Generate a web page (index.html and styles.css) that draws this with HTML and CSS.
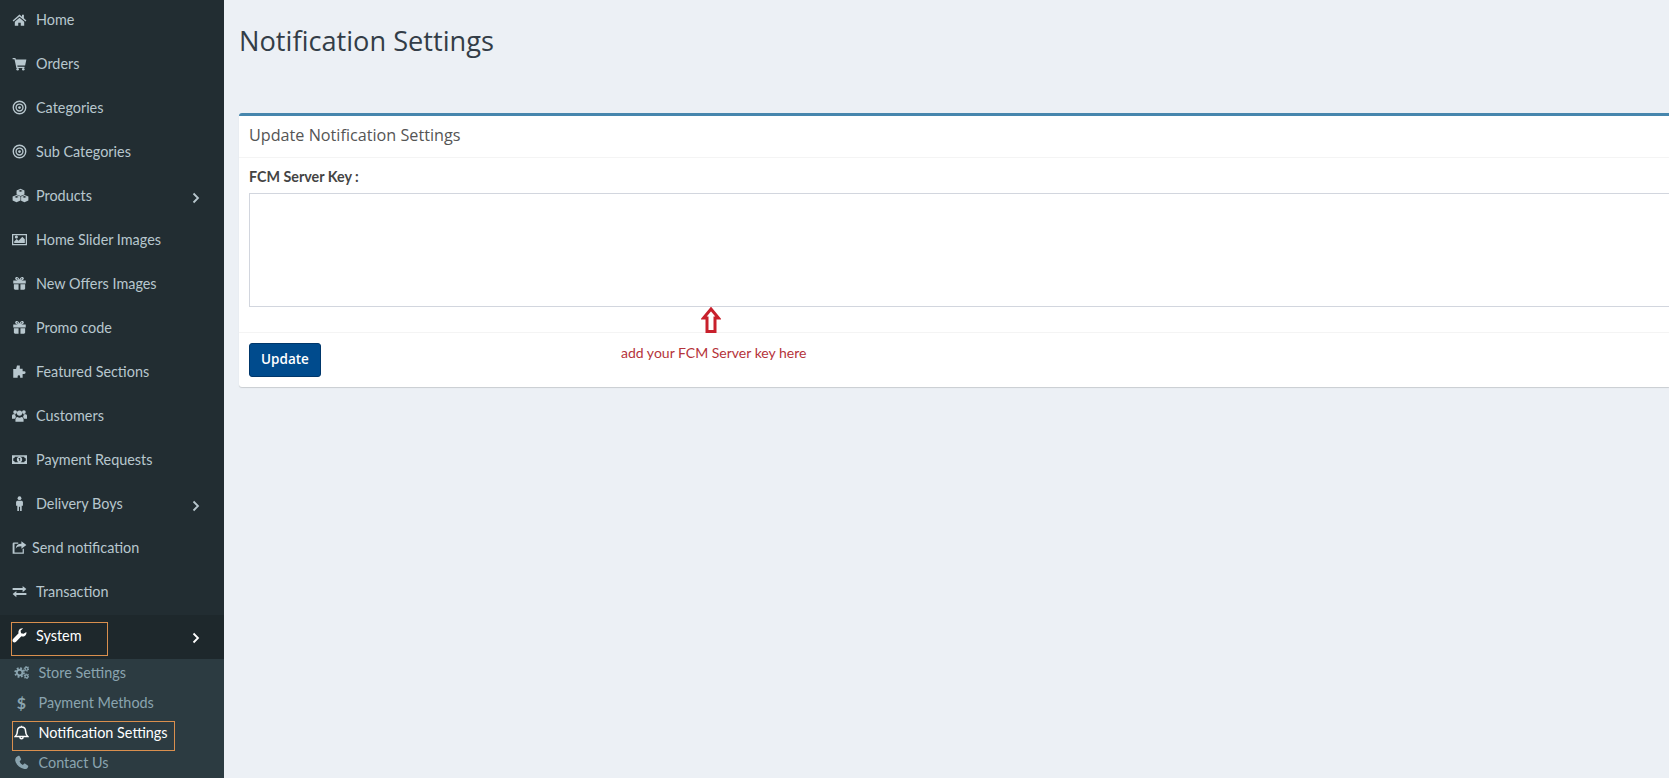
FILE: index.html
```html
<!DOCTYPE html>
<html lang="en">
<head>
  <meta charset="UTF-8">
  <title>Notification Settings</title>
  <link rel="stylesheet" href="styles.css">
</head>
<body>
  <aside class="sidebar">
    <a class="nav-item"><svg class="icon" viewBox="0 0 24 24"><path d="M12 4 1 13.500l1.400 1.600L12 7l9.600 8.100 1.400-1.600-4-3.400V4.500h-3v3zM4.500 15.500V22H10v-5h4v5h5.500v-6.500L12 9.200z"/></svg><span>Home</span></a>
    <a class="nav-item"><svg class="icon" viewBox="0 0 24 24"><path d="M1 3h4.500l.6 2.500H23l-2 9.500H8.500l.4 2H20v2.200H7L4 5.200H1z"/><circle cx="9" cy="21" r="2"/><circle cx="18" cy="21" r="2"/></svg><span>Orders</span></a>
    <a class="nav-item"><svg class="icon" viewBox="0 0 24 24"><circle class="ring" cx="12" cy="12" r="10"/><circle class="ring" cx="12" cy="12" r="5.500"/><circle cx="12" cy="12" r="2.200"/></svg><span>Categories</span></a>
    <a class="nav-item"><svg class="icon" viewBox="0 0 24 24"><circle class="ring" cx="12" cy="12" r="10"/><circle class="ring" cx="12" cy="12" r="5.500"/><circle cx="12" cy="12" r="2.200"/></svg><span>Sub Categories</span></a>
    <a class="nav-item has-arrow"><svg class="icon wide" viewBox="0 0 28 24"><path fill-rule="evenodd" d="M14 1l6.500 2.700v6.600L14 13l-6.500-2.700V3.700zM14 3 10.500 4.400 14 5.800l3.500-1.400zM7.500 11 14 13.700v6.600L7.500 23 1 20.300v-6.600zM7.500 13 4 14.400l3.500 1.400 3.500-1.400zM20.500 11l6.500 2.700v6.600L20.500 23 15 20.700v-7z M20.500 13 17 14.400l3.500 1.400 3.500-1.400z"/></svg><span>Products</span><svg class="chevron" viewBox="0 0 8 12"><path d="M1.500 1.500 6 6l-4.500 4.500"/></svg></a>
    <a class="nav-item"><svg class="icon" viewBox="0 0 24 24"><path fill-rule="evenodd" d="M0 3h24v18H0zm2 2v14h20V5zm1.500 12.500V15l4-4 3 3 6-6.500 4 4v6zM7 10.500a2.500 2.500 0 1 1 0-5 2.500 2.500 0 0 1 0 5z"/></svg><span>Home Slider Images</span></a>
    <a class="nav-item"><svg class="icon" viewBox="0 0 24 24"><path fill-rule="evenodd" d="M3 13h7.500v9H4.500L3 20.500zM13.500 13H21v7.500L19.500 22h-6zM2 7h7.300C7 7 5 5.500 5 4s1.200-2.500 2.700-2.500c2 0 3.500 1.500 4.300 4 .8-2.500 2.300-4 4.300-4C17.800 1.500 19 2.500 19 4s-2 3-4.300 3H22v5H2zM8 3.500c-1 0-1.200 1.700 2.500 2.500C9.800 4.500 9 3.500 8 3.500zM16 3.500c-1 0-1.800 1-2.500 2.500 3.700-.8 3.500-2.500 2.500-2.500z"/></svg><span>New Offers Images</span></a>
    <a class="nav-item"><svg class="icon" viewBox="0 0 24 24"><path fill-rule="evenodd" d="M3 13h7.500v9H4.500L3 20.500zM13.500 13H21v7.500L19.500 22h-6zM2 7h7.300C7 7 5 5.500 5 4s1.200-2.500 2.700-2.500c2 0 3.500 1.500 4.300 4 .8-2.500 2.300-4 4.300-4C17.800 1.500 19 2.500 19 4s-2 3-4.300 3H22v5H2zM8 3.500c-1 0-1.200 1.700 2.500 2.500C9.800 4.500 9 3.500 8 3.500zM16 3.500c-1 0-1.800 1-2.500 2.500 3.700-.8 3.500-2.500 2.500-2.500z"/></svg><span>Promo code</span></a>
    <a class="nav-item"><svg class="icon" viewBox="0 0 24 24"><path d="M8 2.500h4.500v5H17v4h2.500a1.800 1.800 0 0 1 0 4.500H17V22h-4v-2a2 2 0 0 0-4 0v2H2V8h4.500z"/></svg><span>Featured Sections</span></a>
    <a class="nav-item"><svg class="icon" viewBox="0 0 24 24"><circle cx="5" cy="6.500" r="3"/><circle cx="19" cy="6.500" r="3"/><circle cx="12" cy="8" r="4.200"/><path d="M0 17v-4.500C0 11 1 10 2.500 10h3c-.5 2 .2 3.500 1.300 4.500-1.300.8-2 1.500-2.300 2.500zM24 17v-4.500C24 11 23 10 21.500 10h-3c.5 2-.2 3.500-1.300 4.500 1.300.8 2 1.500 2.300 2.500zM5.500 22v-3.500c0-2.500 1.500-4 3.500-4 1.800 1.300 4.200 1.300 6 0 2 0 3.500 1.500 3.500 4V22z"/></svg><span>Customers</span></a>
    <a class="nav-item"><svg class="icon" viewBox="0 0 24 24"><path fill-rule="evenodd" d="M0 5h24v14H0zm4.500 2.500A2.500 2.500 0 0 1 2 10v4a2.500 2.500 0 0 1 2.500 2.500h15A2.500 2.500 0 0 1 22 14v-4a2.500 2.500 0 0 1-2.500-2.500zM12 7.500a4.200 4.500 0 1 1 0 9 4.200 4.500 0 0 1 0-9zM10.500 10v1h1v3h1.500V9.500h-1z"/></svg><span>Payment Requests</span></a>
    <a class="nav-item has-arrow"><svg class="icon" viewBox="0 0 24 24"><circle cx="12" cy="3.500" r="3"/><path d="M9 7.500h6c1.500 0 2.500 1 2.500 2.500v5.500h-2V24h-2.600v-7h-1.800v7H8.500v-8.500h-2V10c0-1.500 1-2.500 2.500-2.500z"/></svg><span>Delivery Boys</span><svg class="chevron" viewBox="0 0 8 12"><path d="M1.500 1.500 6 6l-4.500 4.500"/></svg></a>
    <a class="nav-item tight"><svg class="icon" viewBox="0 0 24 24"><path d="M15 2v4C9 6 6 9 6 14c1.500-3 4-4 9-4v4l8-6z"/><path d="M3 4h7v2H4v14h13v-6h2v8H1V6a2 2 0 0 1 2-2z"/></svg><span>Send notification</span></a>
    <a class="nav-item"><svg class="icon" viewBox="0 0 24 24"><path d="M1 6.500h16V3l6 5-6 5V9.500H1zM23 14.500H7V11l-6 5 6 5v-3.500h16z"/></svg><span>Transaction</span></a>
    <a class="nav-item has-arrow active"><svg class="icon" viewBox="0 0 24 24"><path d="M23 6.500c.5 3-1 6-4 7-1.500.5-2.800.3-4-.2L6.500 22c-1.500 1.500-4 1.500-5 0s-1-3.500.5-5l8.500-8.500c-.5-1.500-.5-3 .2-4.300 1.300-2.700 4-4 7-3.700l-4 4 .8 4 4 .8z"/></svg><span>System</span><svg class="chevron" viewBox="0 0 8 12"><path d="M1.500 1.500 6 6l-4.500 4.500"/></svg><i class="mark mark-system"></i></a>
    <div class="sub-nav">
      <a class="sub-item"><svg class="icon" viewBox="0 0 24 24"><g class="gear"><circle class="teeth" cx="9" cy="12" r="7"/><circle class="hub" cx="9" cy="12" r="4.500"/></g><g class="gear small"><circle class="teeth" cx="20" cy="6" r="3.500"/><circle class="hub" cx="20" cy="6" r="2.300"/></g><g class="gear small"><circle class="teeth" cx="20" cy="18" r="3.500"/><circle class="hub" cx="20" cy="18" r="2.300"/></g></svg><span>Store Settings</span></a>
      <a class="sub-item"><span class="icon dollar">$</span><span>Payment Methods</span></a>
      <a class="sub-item active"><svg class="icon outline" viewBox="0 0 24 24"><path d="M12 3c-4 0-6.500 3-6.500 6.500 0 4.500-1 6.500-3.500 9h20c-2.500-2.500-3.500-4.500-3.500-9C18.500 6 16 3 12 3zM12 1v2M9.500 19.500c0 3.500 5 3.500 5 0"/></svg><span>Notification Settings</span><i class="mark mark-notify"></i></a>
      <a class="sub-item"><svg class="icon" viewBox="0 0 24 24"><path d="M6.500 1.500c1-.5 2-.5 2.500.5l2.200 4c.5 1 .2 1.800-.5 2.500L9 10c.5 2.500 2.500 4.500 5 6l1.800-1.700c.7-.7 1.500-.7 2.300-.2l3.900 2.500c1 .6 1 1.500.5 2.400-1 2.500-3.500 4-6 3.500C9 21 3.500 15.500 2 9c-.5-3 1.500-6.500 4.500-7.500z"/></svg><span>Contact Us</span></a>
    </div>
  </aside>

  <main class="content">
    <h1 class="page-title">Notification Settings</h1>
    <section class="card">
      <h2 class="card-title">Update Notification Settings</h2>
      <div class="card-body">
        <label class="field-label" for="fcm">FCM Server Key :</label>
        <textarea class="field-input" id="fcm"></textarea>
      </div>
      <div class="card-footer">
        <button class="btn" type="button">Update</button>
      </div>
      <svg class="note-arrow" viewBox="0 0 20 26"><path d="M10 2 17.500 11H14V24.500H6V11H2.500z"/></svg>
      <p class="note-text">add your FCM Server key here</p>
    </section>
  </main>
</body>
</html>
```

FILE: styles.css
```css
* {
  box-sizing: border-box;
}

html, body {
  height: 100%;
}

body {
  margin: 0;
  display: flex;
  overflow: hidden;
  background: #ecf0f5;
  font-family: 'Lato', sans-serif;
}

/* sidebar */
.sidebar {
  width: 224px;
  height: 779px;
  flex-shrink: 0;
  margin-top: -1px;
  background: #222d32;
  overflow: hidden;
}

.nav-item {
  position: relative;
  display: flex;
  align-items: center;
  height: 44px;
  padding: 0 0 3px 12px;
  font-size: 14.4px;
  color: #b8c7ce;
}

.nav-item > span {
  margin-left: 9px;
}

.nav-item.tight > span {
  margin-left: 5px;
}

.icon {
  width: 15px;
  height: 15px;
  flex-shrink: 0;
  fill: currentColor;
}

.icon.wide {
  width: 17px;
  margin-right: -2px;
}

.icon .ring {
  fill: none;
  stroke: currentColor;
  stroke-width: 2.2;
}

.icon.outline {
  fill: none;
  stroke: currentColor;
  stroke-width: 2.4;
}

.gear circle {
  fill: none;
  stroke: currentColor;
}

.gear .teeth {
  stroke-width: 3;
  stroke-dasharray: 3 2.500;
}

.gear .hub {
  stroke-width: 3;
}

.gear.small .teeth {
  stroke-width: 2;
  stroke-dasharray: 1.800 1.500;
}

.gear.small .hub {
  stroke-width: 1.800;
}

.chevron {
  position: absolute;
  right: 24px;
  top: 17px;
  width: 8px;
  height: 12px;
  fill: none;
  stroke: currentColor;
  stroke-width: 1.8;
}

.nav-item.active {
  background: #1e282c;
  color: #fff;
}

.sub-nav {
  background: #2c3b41;
}

.sub-item {
  position: relative;
  display: flex;
  align-items: center;
  height: 30px;
  padding: 0 0 4px 14px;
  font-size: 14.4px;
  color: #8aa4af;
}

.sub-item > span:last-of-type {
  margin-left: 9.5px;
}

.sub-item.active {
  color: #fff;
}

.dollar {
  display: block;
  text-align: center;
  font-weight: 700;
  font-size: 16px;
  line-height: 15px;
}

/* orange boxes drawn over the screenshot */
.mark {
  position: absolute;
  border: 1px solid #d98f4e;
  pointer-events: none;
}

.mark-system {
  left: 11px;
  top: 7px;
  width: 97px;
  height: 34px;
}

.mark-notify {
  left: 12px;
  top: 2px;
  width: 163px;
  height: 30px;
}

/* main */
.content {
  flex: 1;
  min-width: 0;
  padding: 0 0 0 15px;
}

.page-title {
  margin: 0;
  padding-top: 21px;
  height: 113px;
  font-family: 'Open Sans', sans-serif;
  font-size: 27.2px;
  line-height: 40px;
  font-weight: 400;
  color: #333d47;
}

.card {
  position: relative;
  background: #fff;
  border-top: 3px solid #4686ad;
  border-radius: 3px 0 0 3px;
  box-shadow: 0 1px 1px rgba(0, 0, 0, 0.15);
}

.card-title {
  margin: 0;
  height: 42px;
  padding: 0 10px;
  border-bottom: 1px solid #f4f4f4;
  font-family: 'Open Sans', sans-serif;
  font-size: 16.2px;
  line-height: 38px;
  font-weight: 400;
  color: #555;
}

.card-body {
  padding: 9px 0 25px 10px;
}

.field-label {
  display: block;
  margin-bottom: 6px;
  font-size: 14.3px;
  line-height: 20px;
  font-weight: 700;
  color: #444;
}

.field-input {
  display: block;
  width: 100%;
  height: 114px;
  padding: 6px 12px;
  border: 1px solid #d2d6de;
  border-right: 0;
  outline: 0;
  resize: none;
}

.card-footer {
  padding: 10px;
  border-top: 1px solid #f4f4f4;
}

.btn {
  display: block;
  width: 72px;
  height: 34px;
  padding: 0 0 2px;
  border: 1px solid #00376b;
  border-radius: 3px;
  background: #004b8d;
  color: #fff;
  font-family: 'Open Sans', sans-serif;
  font-size: 13.5px;
  font-weight: 600;
}

.note-arrow {
  position: absolute;
  left: 462px;
  top: 191px;
  width: 20px;
  height: 26px;
  fill: #fff;
  stroke: #c8202c;
  stroke-width: 3;
}

.note-text {
  position: absolute;
  left: 382px;
  top: 228px;
  margin: 0;
  font-family: 'Lato', sans-serif;
  font-size: 14px;
  line-height: 18px;
  color: #b5333a;
}
```
